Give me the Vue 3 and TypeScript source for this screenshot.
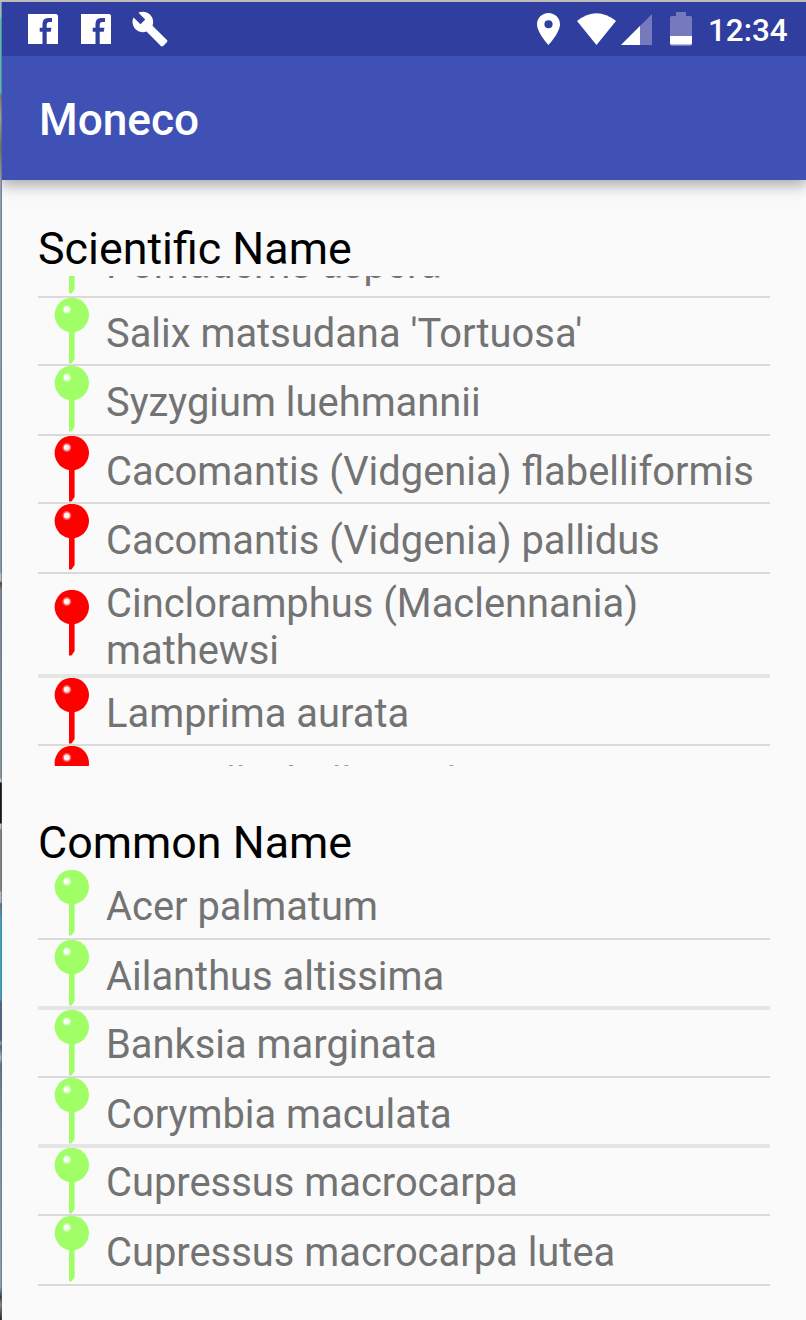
<script setup lang="ts">
interface Species {
  name: string
  kind: 'plant' | 'animal'
  height: number
  wide?: boolean
  tall?: boolean
}

const scientific: Species[] = [
  { name: 'Pomaderris aspera', kind: 'plant', height: 70 },
  { name: "Salix matsudana 'Tortuosa'", kind: 'plant', height: 68 },
  { name: 'Syzygium luehmannii', kind: 'plant', height: 70 },
  { name: 'Cacomantis (Vidgenia) flabelliformis', kind: 'animal', height: 68 },
  { name: 'Cacomantis (Vidgenia) pallidus', kind: 'animal', height: 70 },
  { name: 'Cincloramphus (Maclennania) mathewsi', kind: 'animal', height: 104, wide: true, tall: true },
  { name: 'Lamprima aurata', kind: 'animal', height: 68 },
  { name: 'Mascullia bollacea lava', kind: 'animal', height: 70 },
]

const common: Species[] = [
  { name: 'Acer palmatum', kind: 'plant', height: 70 },
  { name: 'Ailanthus altissima', kind: 'plant', height: 70, wide: true },
  { name: 'Banksia marginata', kind: 'plant', height: 68 },
  { name: 'Corymbia maculata', kind: 'plant', height: 70, wide: true },
  { name: 'Cupressus macrocarpa', kind: 'plant', height: 68 },
  { name: 'Cupressus macrocarpa lutea', kind: 'plant', height: 70 },
]

const sections = [
  { title: 'Scientific Name', items: scientific, scrolled: true },
  { title: 'Common Name', items: common, scrolled: false },
]
</script>

<template>
  <div class="screen">
    <div class="edge"></div>
    <div class="phone">
      <header class="top">
        <div class="status">
          <svg v-for="n in 2" :key="n" class="fb" viewBox="0 0 30 30">
            <path fill="#fff" d="M0 0H29V1H30V30H18.700V17.700H22.700L23.500 13.700H18.700V10.500Q18.700 8 21 8H24V4H20Q14.500 4 14.500 10V13.700H11.700V17.700H14.500V30H0Z" />
          </svg>
          <svg class="wrench" viewBox="0 0 24 24">
            <path fill="#fff" d="M22.700 19l-9.100-9.100c.9-2.300.4-5-1.500-6.900-2-2-5-2.400-7.400-1.300L9 6 6 9 1.600 4.700C.4 7.100.9 10.100 2.900 12.100c1.900 1.900 4.600 2.400 6.900 1.500l9.100 9.100c.4.4 1 .4 1.400 0l2.300-2.300c.5-.4.5-1.100.1-1.400z" />
          </svg>
          <span class="spacer"></span>
          <svg class="place" viewBox="5 2 14 20" preserveAspectRatio="none">
            <path fill="#fff" d="M12 2C8.130 2 5 5.130 5 9c0 5.250 7 13 7 13s7-7.750 7-13c0-3.870-3.130-7-7-7zm0 9.500a2.500 2.500 0 010-5 2.500 2.500 0 010 5z" />
          </svg>
          <svg class="wifi" viewBox="0 0 39 32">
            <path fill="#fff" d="M0 8Q19.500-7.500 39 8L19.500 32Z" />
          </svg>
          <svg class="signal" viewBox="0 0 31 31">
            <path fill="#757abc" d="M31 0V31H0Z" />
            <path fill="#fff" d="M19 12V31H0Z" />
          </svg>
          <svg class="battery" viewBox="0 0 22 34">
            <path fill="#757abc" d="M6 0H16V4H20.500Q22 4 22 5.500V32Q22 34 20 34H2Q0 34 0 32V5.500Q0 4 1.500 4H6Z" />
            <path fill="#fff" d="M0 24H22V31.500Q22 32.500 20.500 32.500H1.500Q0 32.500 0 31.500Z" />
          </svg>
          <span class="clock">12:34</span>
        </div>
        <h1 class="title">Moneco</h1>
      </header>
      <main class="content">
        <section v-for="s in sections" :key="s.title" class="group">
          <h2 class="heading">{{ s.title }}</h2>
          <ul class="list" :class="{ scrolled: s.scrolled }">
            <li
              v-for="item in s.items"
              :key="item.name"
              class="row"
              :class="[item.kind, { wide: item.wide, tall: item.tall, roomy: item.height === 70 }]"
              :style="{ height: item.height + 'px' }"
            >
              <svg class="pin" viewBox="0 0 36 67">
                <path class="ink" d="M15 30H20.600V61L17.500 65.500H15Z" />
                <circle class="ink" cx="17.800" cy="17" r="17.200" />
                <circle cx="12.800" cy="11.600" r="4.500" fill="#fff" opacity=".35" />
                <circle cx="12.800" cy="11.600" r="3" fill="#fff" opacity=".9" />
              </svg>
              <span class="name">{{ item.name }}</span>
            </li>
          </ul>
        </section>
      </main>
    </div>
  </div>
</template>

<style>
body {
  margin: 0;
}
</style>

<style scoped>
.screen {
  width: 806px;
  height: 1320px;
  display: flex;
  overflow: hidden;
  box-sizing: border-box;
  border-top: 2px solid #bdbab9;
  background: #fafafa;
  font-family: Roboto, sans-serif;
}
.edge {
  width: 2px;
  flex: none;
  background:
    linear-gradient(90deg, transparent 50%, rgba(80, 95, 110, 0.45) 50%),
    linear-gradient(#93bfc7 0 14px, #58b5ba 18px 90px, #777 94px, #999da5 115px, #6c7075 145px, #929dae 180px, #8998a8 570px, #bbb 572px 579px, #444 581px, #7e8790 588px, #8b969c 776px, #c1c3c4 777px 780px, #181818 781px 821px, #c1c1c1 822px 826px, #858188 828px 889px, #b4b4b4 890px 900px, #727078 902px, #3da5c3 918px 997px, #536783 1000px 1038px, #a0a4ad 1041px, #566479 1045px, #b5b8be 1056px, #667587 1062px, #7892a5 1130px, #8ba0ac 1285px, #443a45 1295px, #91858e 1302px, #2c2027 1318px);
}
.phone {
  flex: 1;
  min-width: 0;
}
.top {
  height: 178px;
  background: #3f51b5;
  box-shadow: 0 4px 14px 1px rgba(0, 0, 0, 0.34);
  clip-path: inset(0 0 -30px 0);
}
.status {
  height: 54px;
  box-sizing: border-box;
  padding: 0 19px 0 26px;
  display: flex;
  align-items: center;
  background: #303f9f;
}
.fb {
  width: 30px;
  height: 30px;
  margin-right: 23px;
}
.wrench {
  width: 38px;
  height: 38px;
  margin-left: -3px;
}
.spacer {
  flex: 1;
}
.place {
  width: 23px;
  height: 32px;
  margin-right: 17px;
}
.wifi {
  width: 39px;
  height: 32px;
  margin-right: 5px;
}
.signal {
  width: 31px;
  height: 31px;
  margin-right: 18px;
}
.battery {
  width: 22px;
  height: 34px;
  margin-right: 16px;
}
.clock {
  width: 79px;
  padding-top: 3px;
  color: #fff;
  font-size: 31.4px;
  line-height: 54px;
  font-weight: 500;
  white-space: nowrap;
}
.title {
  margin: 0;
  padding-left: 37px;
  color: #fff;
  font-size: 44.200px;
  font-weight: 500;
  line-height: 128px;
}
.content {
  padding: 42px 36px 0;
}
.heading {
  margin: 0;
  height: 54px;
  color: #000;
  font-size: 44.800px;
  font-weight: 400;
  line-height: 53px;
  white-space: nowrap;
}
.list {
  margin: 0;
  padding: 0;
  list-style: none;
}
.list.scrolled {
  height: 490px;
  overflow: hidden;
  margin-bottom: 50px;
}
.scrolled .row:first-child {
  margin-top: -48px;
}
.row {
  box-sizing: border-box;
  display: flex;
  align-items: flex-start;
  border-bottom: 2px solid #dadada;
}
.row.wide {
  border-bottom: 4px solid #e5e5e5;
}
.pin {
  flex: none;
  width: 36px;
  height: 67px;
  margin: 0 16px;
}
.plant .ink {
  fill: #a0ff66;
}
.animal .ink {
  fill: #ff0000;
}
.tall .pin {
  margin-top: 16px;
}
.name {
  padding-top: 11px;
  color: #737373;
  font-size: 39.880px;
  line-height: 47px;
}
.scrolled .name {
  padding-top: 12px;
}
.row.roomy .name {
  padding-top: 13px;
}
.row.tall .name {
  padding-top: 6px;
}
</style>
